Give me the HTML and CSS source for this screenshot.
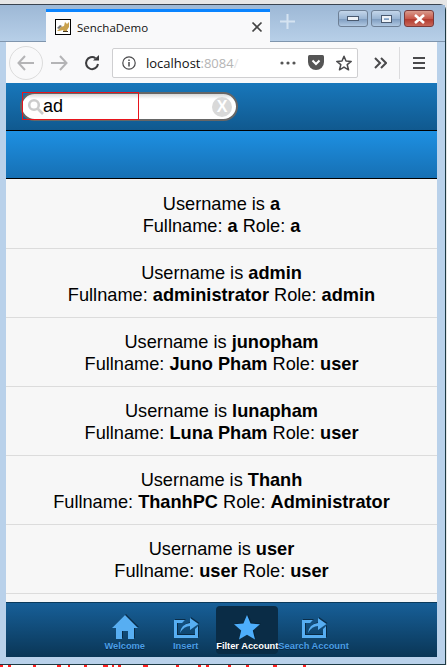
FILE: index.html
```html
<!DOCTYPE html>
<html>
<head>
	<meta charset="utf-8">
	<title>SenchaDemo</title>
	<link rel="stylesheet" href="styles.css">
</head>
<body>
<div class="window">
	<div class="tabstrip">
		<div class="tab">
			<svg class="favicon" width="16" height="16" viewBox="0 0 16 16">
				<rect x="0.5" y="0.5" width="15" height="15" fill="#fff" stroke="#000"/>
				<path d="M2 12 L6 8 L9 7 L10 3 L12 5 L14 3 L14 8 L12 11 L12 13 L9 13 L8 11 L4 12 Z" fill="#c9a24f"/>
				<path d="M2 9 L5 6 L7 7 L4 10 Z" fill="#777"/>
				<path d="M8 12 L13 12 L13 13 L8 13 Z" fill="#4a3a20"/>
			</svg>
			<span class="tab-title">SenchaDemo</span>
			<svg class="tab-close" width="12" height="12" viewBox="0 0 12 12"><path d="M1.5 1.5 L10.5 10.5 M10.5 1.5 L1.5 10.5" stroke="#444" stroke-width="1.7"/></svg>
		</div>
		<svg class="new-tab" width="15" height="15" viewBox="0 0 15 15"><path d="M7.5 0 V15 M0 7.5 H15" stroke="#d5e3f1" stroke-width="2"/></svg>
		<div class="win-controls">
			<div class="win-btn"><span class="glyph-min"></span></div>
			<div class="win-btn"><span class="glyph-max"></span></div>
			<div class="win-btn close">
				<svg width="13" height="10" viewBox="0 0 13 10"><path d="M2 1 L11 9 M11 1 L2 9" stroke="#fff" stroke-width="2.6"/></svg>
			</div>
		</div>
	</div>

	<div class="toolbar">
		<div class="back">
			<svg width="18" height="16" viewBox="0 0 18 16"><path d="M8 1 L1.5 8 L8 15 M2 8 H17" fill="none" stroke="#b4b4b6" stroke-width="2"/></svg>
		</div>
		<svg class="forward" width="17" height="16" viewBox="0 0 17 16"><path d="M9 1 L15.5 8 L9 15 M15 8 H0" fill="none" stroke="#b4b4b6" stroke-width="2"/></svg>
		<svg class="reload" width="16" height="16" viewBox="0 0 16 16"><path d="M14 9 A6 6 0 1 1 11.5 3.2" fill="none" stroke="#3c3c3e" stroke-width="2"/><path d="M9 5.6 L15 5.6 L15 0 Z" fill="#3c3c3e"/></svg>
		<div class="urlbar">
			<svg class="info" width="14" height="14" viewBox="0 0 14 14"><circle cx="7" cy="7" r="6.2" fill="none" stroke="#4a4a4c" stroke-width="1.2"/><path d="M7 6 V10.5 M7 3.4 V5" stroke="#4a4a4c" stroke-width="1.5"/></svg>
			<span class="host">localhost<span class="port">:8084<span class="port-fade">/</span></span></span>
			<svg class="dots" width="16" height="4" viewBox="0 0 16 4"><circle cx="2" cy="2" r="1.6" fill="#555"/><circle cx="8" cy="2" r="1.6" fill="#555"/><circle cx="14" cy="2" r="1.6" fill="#555"/></svg>
			<svg class="pocket" width="16" height="15" viewBox="0 0 16 15"><path d="M1.5 0 H14.5 Q16 0 16 1.5 V7 A8 8 0 0 1 0 7 V1.5 Q0 0 1.5 0 Z" fill="#555"/><path d="M4.5 5.5 L8 9 L11.5 5.5" fill="none" stroke="#fff" stroke-width="2"/></svg>
			<svg class="star-outline" width="16" height="16" viewBox="0 0 16 16"><path d="M8 1.2 L10 6 L15.2 6.4 L11.2 9.7 L12.5 14.8 L8 12.1 L3.5 14.8 L4.8 9.7 L0.8 6.4 L6 6 Z" fill="none" stroke="#4a4a4c" stroke-width="1.5" stroke-linejoin="round"/></svg>
		</div>
		<svg class="overflow" width="13" height="12" viewBox="0 0 13 12"><path d="M1 1 L6 6 L1 11 M7 1 L12 6 L7 11" fill="none" stroke="#4a4a4c" stroke-width="2"/></svg>
		<div class="tool-sep"></div>
		<svg class="menu" width="12" height="12" viewBox="0 0 12 12"><path d="M0 1 H12 M0 6 H12 M0 11 H12" stroke="#4a4a4c" stroke-width="2"/></svg>
	</div>

	<div class="app">
		<div class="searchbar">
			<div class="searchfield">
				<svg class="search-icon" width="17" height="17" viewBox="0 0 17 17"><circle cx="7" cy="7" r="4.8" fill="none" stroke="#ccc" stroke-width="2.6"/><path d="M10.5 10.5 L16 16" stroke="#ccc" stroke-width="2.6"/></svg>
				<span class="search-text">ad</span>
				<div class="clear-btn">X</div>
				<div class="focus-box"></div>
			</div>
		</div>
		<div class="titlebar"></div>
		<div class="list">
			<div class="row">Username is <b>a</b><br>Fullname: <b>a</b> Role: <b>a</b></div>
			<div class="row">Username is <b>admin</b><br>Fullname: <b>administrator</b> Role: <b>admin</b></div>
			<div class="row">Username is <b>junopham</b><br>Fullname: <b>Juno Pham</b> Role: <b>user</b></div>
			<div class="row">Username is <b>lunapham</b><br>Fullname: <b>Luna Pham</b> Role: <b>user</b></div>
			<div class="row">Username is <b>Thanh</b><br>Fullname: <b>ThanhPC</b> Role: <b>Administrator</b></div>
			<div class="row">Username is <b>user</b><br>Fullname: <b>user</b> Role: <b>user</b></div>
		</div>
		<div class="tabbar">
			<div class="tabitem">
				<svg width="26" height="25" viewBox="0 0 26 25"><path d="M13 0 L26 13 L22 13 L22 24 L16 24 L16 16 L10 16 L10 24 L4 24 L4 13 L0 13 Z" fill="#57aef2"/></svg>
				<span>Welcome</span>
			</div>
			<div class="tabitem">
				<svg width="26" height="25" viewBox="0 0 26 25"><path d="M1 5 H12 L9 8 H4 V20 H22 V14 L25 11 V23 H1 Z" fill="#57aef2"/><path d="M7 18 Q8 9 17 8 V3 L25.5 9 L17 15 V11 Q11 11 7 18 Z" fill="#57aef2"/></svg>
				<span>Insert</span>
			</div>
			<div class="tabitem active">
				<svg width="26" height="25" viewBox="0 0 26 25"><path d="M13 0 L16.6 8.6 L26 9.3 L18.8 15.4 L21 24.6 L13 19.7 L5 24.6 L7.2 15.4 L0 9.3 L9.4 8.6 Z" fill="#4daefc"/></svg>
				<span>Filter Account</span>
			</div>
			<div class="tabitem">
				<svg width="26" height="25" viewBox="0 0 26 25"><path d="M1 5 H12 L9 8 H4 V20 H22 V14 L25 11 V23 H1 Z" fill="#57aef2"/><path d="M7 18 Q8 9 17 8 V3 L25.5 9 L17 15 V11 Q11 11 7 18 Z" fill="#57aef2"/></svg>
				<span>Search Account</span>
			</div>
		</div>
	</div>
</div>
<!-- top edge of the red console text behind the window -->
<svg class="behind" width="447" height="2" viewBox="0 0 447 2"><path d="M0 1h3M8 1h3M33 1h3M57 1h4M68 1h2M84 1h3M103 1h5M112 1h2M118 1h3M143 1h5M176 1h3M198 1h3M206 1h3M228 1h3M246 1h3M273 1h4M303 1h3" stroke="#f22" stroke-width="2" fill="none"/></svg>
</body>
</html>
```

FILE: styles.css
```css
html, body {
	margin: 0;
	height: 100%;
	overflow: hidden;
	background: #e6e6e6;
	font-family: "Liberation Sans", Arial, sans-serif;
}

.window {
	height: 661px;
	margin: 4px 1px 0 0;
	padding: 0 8px 7px 6px;
	box-sizing: border-box;
	display: flex;
	flex-direction: column;
	background: #b9d1ea;
	border-top: 1px solid #3a4450;
	border-right: 1px solid #1d3a44;
	border-bottom: 1px solid #1d3a44;
	border-radius: 0 6px 0 0;
}
.behind {
	display: block;
	background: #fff;
}

/* browser chrome */
.tabstrip {
	height: 37px;
	flex: none;
	display: flex;
	align-items: flex-end;
	background: linear-gradient(#9db8d6, #b7cfe8);
	border-bottom: 1px solid #7f95ad;
	margin: 0 -8px 0 -6px;
	padding: 0 8px 0 46px;
	box-sizing: border-box;
}
.tab {
	width: 224px;
	height: 33px;
	margin-bottom: -1px;
	box-sizing: border-box;
	border-top: 3px solid #0a84ff;
	background: #f9f9fa;
	display: flex;
	align-items: center;
	padding: 0 7px 0 9px;
}
.tab-title {
	margin-left: 6px;
	font-family: "Open Sans", sans-serif;
	font-size: 11.5px;
	color: #111;
	flex: 1;
}
.new-tab { margin: 0 0 12px 10px; }
.win-controls {
	margin-left: auto;
	margin-right: 3px;
	align-self: flex-start;
	margin-top: 5px;
	display: flex;
	gap: 3px;
}
.win-btn {
	width: 30px;
	height: 17px;
	box-sizing: border-box;
	border: 1px solid #6d7f95;
	border-radius: 3px;
	background: linear-gradient(#c4d6ea, #9bb6d4 50%, #7f9dc0 55%, #b0c8e2);
	display: flex;
	align-items: center;
	justify-content: center;
}
.win-btn.close {
	border-color: #7a3a3a;
	background: linear-gradient(#d99a8c, #c85a4c 50%, #b23a2e 55%, #c8675a);
}
.glyph-min {
	width: 10px;
	height: 3px;
	background: #eef2f7;
	border: 1px solid #4a5a70;
}
.glyph-max {
	width: 5px;
	height: 2px;
	border: 2px solid #eef2f7;
	outline: 1px solid #4a5a70;
}

.toolbar {
	height: 41px;
	flex: none;
	display: flex;
	align-items: center;
	background: #f9f9fa;
	padding-left: 3px;
}
.back {
	width: 32px;
	height: 32px;
	border: 1px solid #dcdcdc;
	border-radius: 50%;
	display: flex;
	align-items: center;
	justify-content: center;
}
.forward { margin-left: 8px; }
.reload { margin-left: 16px; }
.urlbar {
	width: 246px;
	height: 30px;
	margin-left: 12px;
	box-sizing: border-box;
	border: 1px solid #cfcfd1;
	border-radius: 2px;
	background: #fff;
	display: flex;
	align-items: center;
	padding-left: 9px;
}
.host {
	margin-left: 10px;
	width: 96px;
	font-family: "Open Sans", sans-serif;
	font-size: 13px;
	color: #111;
	white-space: nowrap;
}
.port { color: #b5b5b5; }
.port-fade { color: #e2e2e2; }
.dots { margin-left: 38px; }
.pocket { margin-left: 12px; }
.star-outline { margin-left: 12px; }
.overflow { margin-left: 16px; }
.tool-sep {
	width: 1px;
	height: 32px;
	margin-left: 12px;
	background: #dcdcde;
}
.menu { margin-left: 13px; }

/* sencha app */
.app {
	flex: 1;
	min-height: 0;
	display: flex;
	flex-direction: column;
	background: #f7f7f7;
}
.searchbar {
	height: 48px;
	flex: none;
	box-sizing: border-box;
	padding: 9px 0 0 14px;
	background: linear-gradient(#1877bb, #10598f);
	border-bottom: 1px solid #000;
}
.searchfield {
	position: relative;
	width: 218px;
	height: 29px;
	box-sizing: border-box;
	border: 2px solid #666;
	border-radius: 15px;
	background: linear-gradient(#d8d8d8, #fff 5px);
	display: flex;
	align-items: center;
}
.search-icon { margin-left: 5px; flex: none; }
.search-text {
	margin-left: -1px;
	font-size: 18px;
	color: #000;
}
.clear-btn {
	position: absolute;
	right: 4px;
	top: 3px;
	width: 20px;
	height: 20px;
	border-radius: 50%;
	background: #d9d9d9;
	color: #fff;
	font-size: 16px;
	font-weight: bold;
	line-height: 20px;
	text-align: center;
}
.focus-box {
	position: absolute;
	left: 0;
	top: -2px;
	width: 117px;
	height: 28px;
	box-sizing: border-box;
	border: 1px solid #e8141c;
}
.titlebar {
	height: 48px;
	flex: none;
	box-sizing: border-box;
	background: linear-gradient(#1e90e2, #1670b4);
	border-bottom: 1px solid #000;
}
.list {
	flex: 1;
	min-height: 0;
	overflow: hidden;
	padding-top: 1px;
}
.row {
	height: 69px;
	box-sizing: border-box;
	border-bottom: 1px solid #dcdcdc;
	padding-top: 13px;
	font-size: 18.2px;
	line-height: 22px;
	text-align: center;
	color: #000;
}

.tabbar {
	height: 55px;
	flex: none;
	box-sizing: border-box;
	display: flex;
	justify-content: center;
	padding-top: 3px;
	border-top: 1px solid #0a3a5c;
	background: linear-gradient(#175f98, #0a3656);
}
.tabitem {
	min-width: 61px;
	height: 48px;
	box-sizing: border-box;
	padding-top: 9px;
	border-radius: 4px;
	display: flex;
	flex-direction: column;
	align-items: center;
	font-size: 9.3px;
	font-weight: bold;
	color: #4a9ee6;
	white-space: nowrap;
	text-shadow: 0 1px 0 rgba(0, 0, 0, .4);
}
.tabitem svg { filter: drop-shadow(1px -1px 0 rgba(5, 30, 50, .7)); }
.tabitem span { margin-top: 1px; }
.tabitem.active {
	background: #0a2c46;
	color: #fff;
}
```
